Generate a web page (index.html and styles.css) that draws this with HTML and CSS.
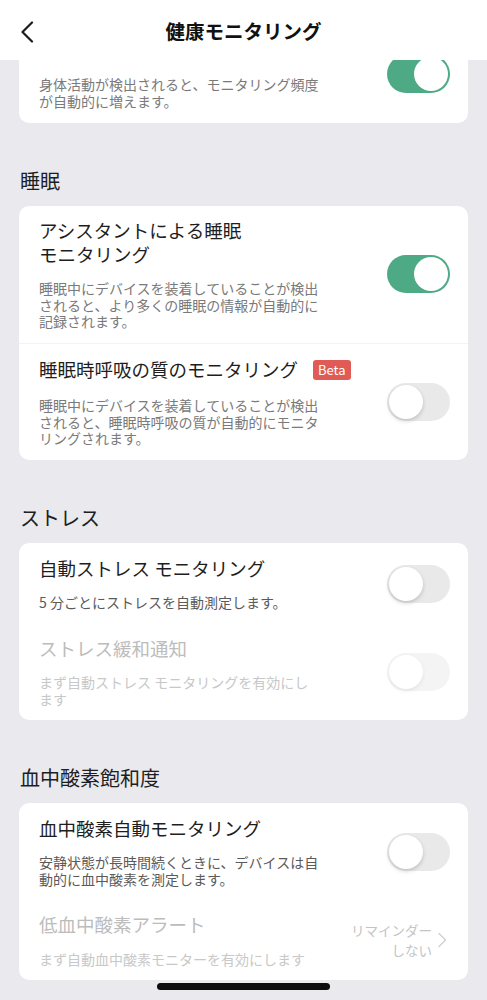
FILE: index.html
```html
<!DOCTYPE html>
<html lang="ja">
<head>
    <meta charset="UTF-8">
    <meta name="viewport" content="width=device-width, initial-scale=1.0">
    <title>健康モニタリング</title>
    <link rel="stylesheet" href="styles.css">
</head>
<body>

<div class="page">
    <div class="header">
        <svg class="back" width="14" height="22" viewBox="0 0 14 22">
            <polyline points="12,1.5 2.5,11 12,20.5" fill="none" stroke="#1c1c1c" stroke-width="2.2" stroke-linecap="round" stroke-linejoin="round"/>
        </svg>
        <div class="header-title">健康モニタリング</div>
    </div>

    <div class="content">
        <div class="card">
            <div class="row">
                <div class="text">
                    <div class="title-space"></div>
                    <div class="desc">身体活動が検出されると、モニタリング頻度が自動的に増えます。</div>
                </div>
                <div class="toggle on"><span class="knob"></span></div>
            </div>
        </div>

        <div class="section">睡眠</div>
        <div class="card">
            <div class="row">
                <div class="text">
                    <div class="title">アシスタントによる睡眠<br>モニタリング</div>
                    <div class="desc">睡眠中にデバイスを装着していることが検出されると、より多くの睡眠の情報が自動的に記録されます。</div>
                </div>
                <div class="toggle on"><span class="knob"></span></div>
            </div>
            <div class="divider"></div>
            <div class="row beta-row">
                <div class="text">
                    <div class="title">睡眠時呼吸の質のモニタリング<span class="badge">Beta</span></div>
                    <div class="desc">睡眠中にデバイスを装着していることが検出されると、睡眠時呼吸の質が自動的にモニタリングされます。</div>
                </div>
                <div class="toggle"><span class="knob"></span></div>
            </div>
        </div>

        <div class="section">ストレス</div>
        <div class="card">
            <div class="row">
                <div class="text">
                    <div class="title">自動ストレス モニタリング</div>
                    <div class="desc dark">5 分ごとにストレスを自動測定します。</div>
                </div>
                <div class="toggle"><span class="knob"></span></div>
            </div>
            <div class="row disabled">
                <div class="text">
                    <div class="title">ストレス緩和通知</div>
                    <div class="desc">まず自動ストレス モニタリングを有効にします</div>
                </div>
                <div class="toggle"><span class="knob"></span></div>
            </div>
        </div>

        <div class="section">血中酸素飽和度</div>
        <div class="card">
            <div class="row">
                <div class="text">
                    <div class="title">血中酸素自動モニタリング</div>
                    <div class="desc dark">安静状態が長時間続くときに、デバイスは自動的に血中酸素を測定します。</div>
                </div>
                <div class="toggle"><span class="knob"></span></div>
            </div>
            <div class="row disabled">
                <div class="text">
                    <div class="title">低血中酸素アラート</div>
                    <div class="desc">まず自動血中酸素モニターを有効にします</div>
                </div>
                <div class="value">リマインダー<br>しない</div>
                <svg class="chev" width="10" height="16" viewBox="0 0 10 16">
                    <polyline points="2,1.5 8.5,8 2,14.5" fill="none" stroke="#d2d2d2" stroke-width="1.5" stroke-linecap="round" stroke-linejoin="round"/>
                </svg>
            </div>
        </div>
    </div>

    <div class="home-bar"></div>
</div>

</body>
</html>
```

FILE: styles.css
```css
body {
    margin: 0;
    font-family: "Noto Sans CJK JP", "Noto Sans", sans-serif;
    background-color: #e9e9ee;
    color: #1e1e1e;
}
.page {
    position: relative;
    width: 487px;
    height: 1000px;
    overflow: hidden;
    background-color: #e9e9ee;
}
.header {
    position: absolute;
    top: 0;
    left: 0;
    right: 0;
    height: 60px;
    background-color: #fff;
    z-index: 2;
    display: flex;
    align-items: center;
    justify-content: center;
}
.back {
    position: absolute;
    left: 20px;
    top: 21px;
}
.header-title {
    font-size: 19.5px;
    font-weight: bold;
    color: #111;
    line-height: 28px;
    margin-top: 2px;
}
.content {
    padding: 25px 19px 0;
}
.card {
    background-color: #fff;
    border-radius: 10px;
    padding: 0 18px 0 20px;
}
.section {
    font-size: 20px;
    line-height: 28px;
    margin: 44px 0 11px 1px;
    color: #1e1e1e;
}
.row {
    display: flex;
    align-items: center;
    padding: 13.5px 0;
}
.row.disabled {
    padding: 12.5px 0 13px;
}
.text {
    flex: 1;
    max-width: 281px;
}
.title-space {
    height: 23.5px;
}
.title {
    font-size: 18.5px;
    line-height: 23.5px;
    color: #1e1e1e;
    white-space: nowrap;
}
.desc {
    font-size: 14px;
    line-height: 16.5px;
    color: #7a7a7a;
    margin-top: 14px;
}
.desc.dark {
    color: #5a5a5a;
}
.beta-row .desc {
    margin-top: 16px;
}
.badge {
    display: inline-block;
    vertical-align: 2px;
    margin-left: 15px;
    padding: 0 5px;
    height: 20px;
    line-height: 20px;
    font-size: 13px;
    color: #fff;
    background-color: #e15b56;
    border-radius: 3px;
}
.divider {
    height: 1px;
    background-color: #f3f3f3;
    margin: 0 -18px 0 -20px;
}
.toggle {
    position: relative;
    width: 63px;
    height: 38px;
    border-radius: 19px;
    background-color: #e9e9ea;
    margin-left: auto;
    flex-shrink: 0;
}
.toggle.on {
    background-color: #4ea985;
}
.knob {
    position: absolute;
    top: 2px;
    left: 2px;
    width: 34px;
    height: 34px;
    border-radius: 50%;
    background-color: #fff;
    box-shadow: 0 2px 4px rgba(0, 0, 0, 0.18);
}
.toggle.on .knob {
    left: 27px;
    box-shadow: none;
}
.disabled .title {
    color: #bcbcbc;
}
.disabled .desc {
    color: #c8c8c8;
}
.disabled .toggle {
    background-color: #f4f4f5;
}
.disabled .knob {
    box-shadow: 0 2px 4px rgba(0, 0, 0, 0.07);
}
.value {
    margin-left: auto;
    text-align: right;
    font-size: 13.5px;
    line-height: 20px;
    color: #c4c4c4;
}
.chev {
    margin: 0 3px 0 5px;
}
.home-bar {
    position: absolute;
    left: 157px;
    bottom: 10px;
    width: 173px;
    height: 7px;
    border-radius: 4px;
    background-color: #0c0c0c;
}
```
